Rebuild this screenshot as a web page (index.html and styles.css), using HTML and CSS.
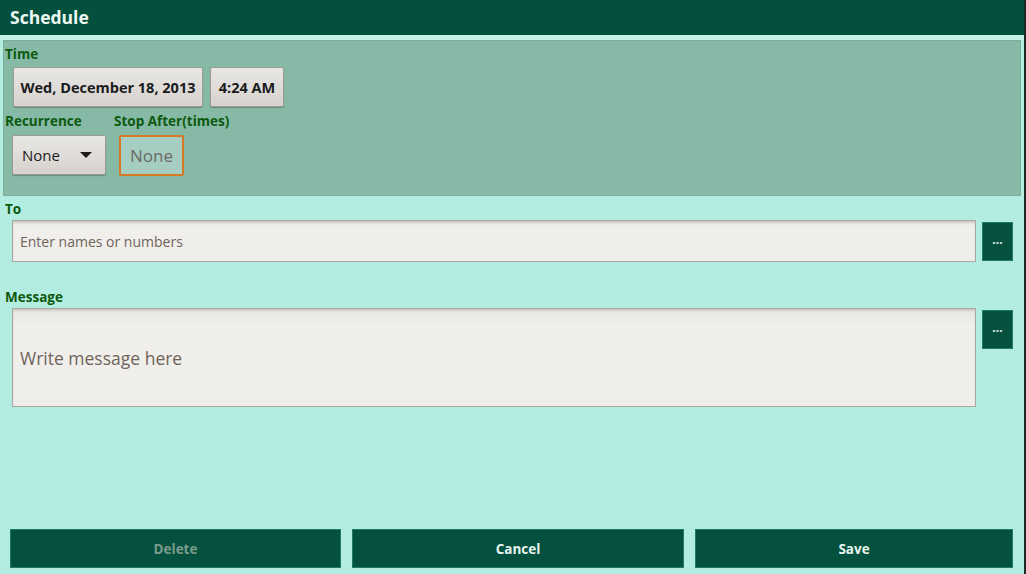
FILE: index.html
```html
<!DOCTYPE html>
<html lang="en">
<head>
    <meta charset="UTF-8">
    <title>Schedule</title>
    <link rel="stylesheet" href="styles.css">
</head>
<body>
<div class="screen">
    <div class="titleBar">Schedule</div>

    <div class="timePanel">
        <div class="label">Time</div>
        <div class="row">
            <button class="btn btnDate">Wed, December 18, 2013</button>
            <button class="btn btnTime">4:24 AM</button>
        </div>
        <div class="row labelsRow">
            <div class="label recLabel">Recurrence</div>
            <div class="label">Stop After(times)</div>
        </div>
        <div class="row">
            <div class="btn spinner">
                <span>None</span>
                <span class="caret"></span>
            </div>
            <div class="stopEdit">None</div>
        </div>
    </div>

    <div class="label toLabel">To</div>
    <div class="fieldRow">
        <div class="field fieldTo">Enter names or numbers</div>
        <button class="moreBtn">...</button>
    </div>

    <div class="label msgLabel">Message</div>
    <div class="fieldRow">
        <div class="field fieldMsg">Write message here</div>
        <button class="moreBtn">...</button>
    </div>

    <div class="actions">
        <button class="actionBtn disabled">Delete</button>
        <button class="actionBtn">Cancel</button>
        <button class="actionBtn">Save</button>
    </div>
</div>
</body>
</html>
```

FILE: styles.css
```css
* {
    box-sizing: border-box;
}

body {
    margin: 0;
    background: #b3ece0;
    font-family: "Open Sans", "DejaVu Sans", sans-serif;
}

.screen {
    width: 1026px;
    height: 574px;
    display: flex;
    flex-direction: column;
    border-right: 2px solid #1d2a26;
    background: #b3ece0;
    overflow: hidden;
}

.titleBar {
    height: 35px;
    background: #04503f;
    color: #eef8f3;
    font-size: 17.5px;
    font-weight: bold;
    line-height: 35px;
    padding-left: 10px;
    border-bottom: 5px solid #c4f2e6;
    box-sizing: content-box;
}

.timePanel {
    margin: 0 3px 0 3px;
    width: 1018px;
    height: 156px;
    background: #86b9a6;
    border: 1px solid #7eae9b;
    padding: 5px 0 0 1px;
}

.label {
    color: #0c5a0e;
    font-size: 13.5px;
    font-weight: bold;
    line-height: 16px;
}

.row {
    display: flex;
    align-items: flex-start;
}

.btn {
    height: 40px;
    margin-top: 5px;
    background: linear-gradient(#e9e7e4, #d6d2ce);
    border: 1px solid #9e9a95;
    border-radius: 2px;
    box-shadow: 0 1px 1px rgba(0, 0, 0, 0.25);
    color: #1b1b1b;
    font-family: "Open Sans", "DejaVu Sans", sans-serif;
    font-size: 14.5px;
    font-weight: bold;
    padding: 0;
}

.btnDate {
    margin-left: 8px;
    width: 190px;
}

.btnTime {
    margin-left: 7px;
    width: 74px;
}

.labelsRow {
    margin-top: 6px;
}

.recLabel {
    width: 109px;
}

.spinner {
    margin-left: 7px;
    margin-top: 6px;
    width: 94px;
    display: flex;
    align-items: center;
    justify-content: space-between;
    padding: 0 13px 0 9px;
    font-size: 15px;
    font-weight: normal;
}

.caret {
    width: 0;
    height: 0;
    border-left: 6px solid transparent;
    border-right: 6px solid transparent;
    border-top: 6px solid #1b1b1b;
}

.stopEdit {
    margin-left: 13px;
    margin-top: 6px;
    width: 65px;
    height: 41px;
    border: 2px solid #d57a22;
    border-radius: 2px;
    background: #a6cdc1;
    color: #6a6a66;
    font-size: 17px;
    line-height: 37px;
    text-align: center;
}

.toLabel {
    margin: 5px 0 0 5px;
}

.msgLabel {
    margin: 27px 0 0 5px;
}

.fieldRow {
    display: flex;
    align-items: flex-start;
    margin-top: 3px;
    padding-left: 12px;
}

.field {
    width: 964px;
    background: linear-gradient(#e9e8e3, #f0efeb 20%, #efeeea);
    border: 1px solid #a8a8a0;
    box-shadow: inset 0 2px 2px rgba(0, 0, 0, 0.12);
    color: #6f635a;
    display: flex;
    align-items: center;
    padding-left: 7px;
}

.fieldTo {
    height: 42px;
    font-size: 14px;
}

.fieldMsg {
    height: 99px;
    font-size: 17.5px;
}

.moreBtn {
    margin: 2px 0 0 6px;
    width: 31px;
    height: 39px;
    background: #04513f;
    border: 1px solid #1d7b64;
    color: #e6f3ee;
    font-family: "Open Sans", "DejaVu Sans", sans-serif;
    font-size: 12px;
    font-weight: bold;
    padding: 0 0 4px 0;
}

.actions {
    margin-top: auto;
    margin-bottom: 6px;
    padding-left: 10px;
    display: grid;
    grid-template-columns: 331px 332px 318px;
    gap: 11px;
}

.actionBtn {
    height: 39px;
    background: #04513f;
    border: 1px solid #1d7b64;
    color: #e6f5ee;
    font-family: "Open Sans", "DejaVu Sans", sans-serif;
    font-size: 13.5px;
    font-weight: bold;
    padding: 0;
}

.actionBtn.disabled {
    color: #7b9c8d;
}
```
